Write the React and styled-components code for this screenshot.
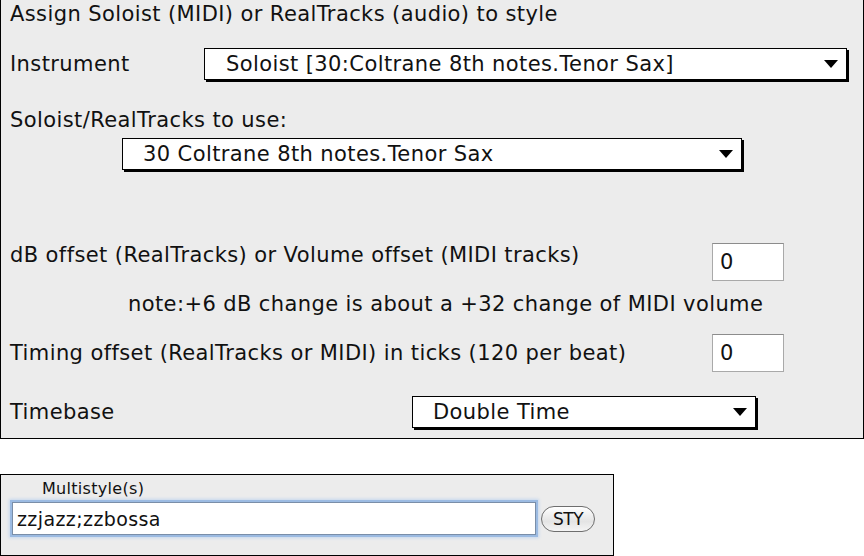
import React from 'react';
import styled, { createGlobalStyle } from 'styled-components';

const GlobalStyle = createGlobalStyle`
  html, body {
    margin: 0;
    padding: 0;
    background: #ffffff;
  }
  body {
    font-family: "DejaVu Sans", "Liberation Sans", sans-serif;
    color: #111;
  }
`;

const Page = styled.div`
  width: 864px;
  height: 556px;
  display: flex;
  flex-direction: column;
`;

const Panel = styled.div`
  box-sizing: border-box;
  width: 864px;
  height: 439px;
  background: #ececec;
  border: 1px solid #000;
  border-top: none;
  display: flex;
  flex-direction: column;
`;

const Row = styled.div`
  display: grid;
  grid-template-columns: ${p => p.$cols || '1fr'};
  align-items: ${p => p.$align || 'center'};
  height: ${p => p.$h}px;
  margin-top: ${p => p.$mt || 0}px;
`;

const Label = styled.div`
  font-size: 21px;
  letter-spacing: 0.4px;
  line-height: 24px;
  padding-left: ${p => p.$indent || 9}px;
  white-space: nowrap;
`;

const Select = styled.div`
  box-sizing: border-box;
  height: 32px;
  background: #fff;
  border: 1px solid #000;
  box-shadow: 2px 2px 0 #000;
  display: flex;
  align-items: center;
  justify-content: space-between;
  padding: 0 8px 0 ${p => p.$pad || 21}px;
  font-size: 21px;
  letter-spacing: 0.4px;
  white-space: nowrap;
`;

const Arrow = () => (
  <svg width="14" height="8" viewBox="0 0 14 8">
    <path d="M0 0 H14 L7 8 Z" fill="#000" />
  </svg>
);

const NumBox = styled.div`
  box-sizing: border-box;
  width: 72px;
  height: 38px;
  background: #fff;
  border: 1px solid #a9a9a9;
  border-top-color: #8c8c8c;
  display: flex;
  align-items: center;
  padding-left: 7px;
  font-size: 21px;
`;

const Lower = styled.div`
  box-sizing: border-box;
  width: 614px;
  height: 82px;
  margin-top: 35px;
  background: #ececec;
  border: 1px solid #000;
  display: flex;
  flex-direction: column;
`;

const SmallLabel = styled.div`
  font-size: 16px;
  letter-spacing: 0.3px;
  line-height: 18px;
  padding: 5px 0 0 41px;
`;

const InputRow = styled.div`
  display: flex;
  align-items: center;
  gap: 5px;
  padding: 4px 0 0 11px;
`;

const TextInput = styled.div`
  box-sizing: border-box;
  width: 524px;
  height: 33px;
  background: #fff;
  border: 1px solid #7a8ea8;
  box-shadow: 0 0 0 2px #9cbbe2, 0 0 3px 3px #c5d7ee;
  display: flex;
  align-items: center;
  padding-left: 4px;
  font-size: 19px;
  letter-spacing: 0.4px;
`;

const PillButton = styled.div`
  box-sizing: border-box;
  width: 54px;
  height: 26px;
  border: 1px solid #6e6e6e;
  border-radius: 13px;
  background: linear-gradient(#ffffff, #e4e4e4 60%, #f4f4f4);
  display: flex;
  align-items: center;
  justify-content: center;
  font-size: 17px;
  letter-spacing: -0.5px;
`;

export default function App() {
  return (
    <Page>
      <GlobalStyle />
      <Panel>
        <Row $h={28}>
          <Label>Assign Soloist (MIDI) or RealTracks (audio) to style</Label>
        </Row>
        <Row $h={36} $mt={18} $cols="203px 643px">
          <Label>Instrument</Label>
          <Select>
            <span>Soloist [30:Coltrane 8th notes.Tenor Sax]</span>
            <Arrow />
          </Select>
        </Row>
        <Row $h={32} $mt={22}>
          <Label>Soloist/RealTracks to use:</Label>
        </Row>
        <Row $h={36} $cols="121px 620px">
          <span />
          <Select $pad={20}>
            <span>30 Coltrane 8th notes.Tenor Sax</span>
            <Arrow />
          </Select>
        </Row>
        <Row $h={38} $mt={71} $align="start" $cols="711px 72px">
          <Label>dB offset (RealTracks) or Volume offset (MIDI tracks)</Label>
          <NumBox>0</NumBox>
        </Row>
        <Row $h={24} $mt={11}>
          <Label $indent={127}>note:+6 dB change is about a +32 change of MIDI volume</Label>
        </Row>
        <Row $h={38} $mt={18} $cols="711px 72px">
          <Label>Timing offset (RealTracks or MIDI) in ticks (120 per beat)</Label>
          <NumBox>0</NumBox>
        </Row>
        <Row $h={33} $mt={23} $cols="411px 344px">
          <Label>Timebase</Label>
          <Select $pad={20}>
            <span>Double Time</span>
            <Arrow />
          </Select>
        </Row>
      </Panel>
      <Lower>
        <SmallLabel>Multistyle(s)</SmallLabel>
        <InputRow>
          <TextInput>zzjazz;zzbossa</TextInput>
          <PillButton>STY</PillButton>
        </InputRow>
      </Lower>
    </Page>
  );
}
